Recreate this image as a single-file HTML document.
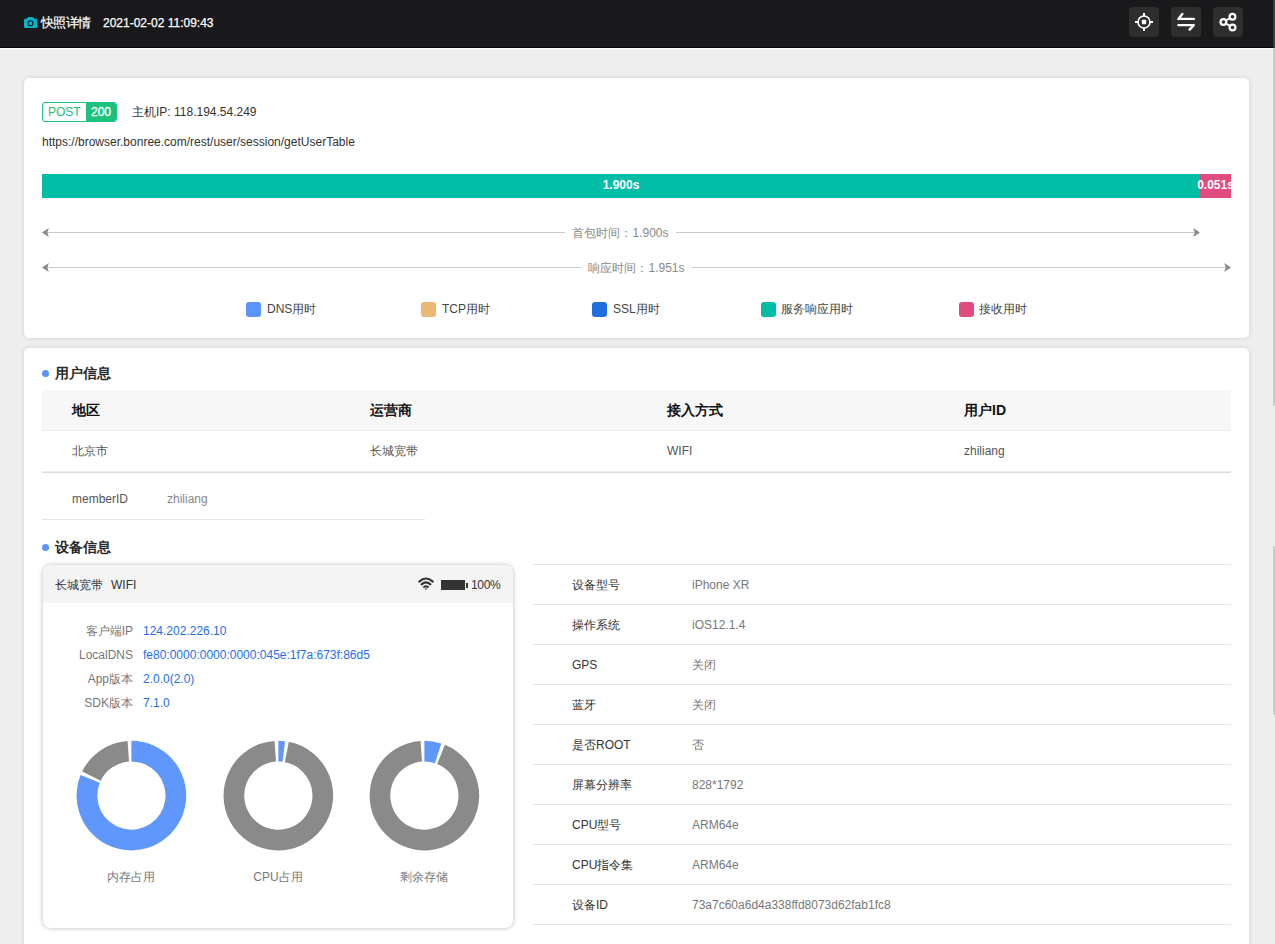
<!DOCTYPE html>
<html><head><meta charset="utf-8">
<style>
*{margin:0;padding:0;box-sizing:border-box}
html,body{width:1275px;height:944px;overflow:hidden}
body{background:#eeeeee;font-family:"Liberation Sans",sans-serif;font-size:12px;color:#333;position:relative}
.abs{position:absolute}
.t{position:absolute;white-space:nowrap;line-height:20px}
#hdr{position:absolute;left:0;top:0;width:1275px;height:48px;background:#19191b;border-bottom:1px solid #070709}
#hdrline{position:absolute;left:0;top:48px;width:1275px;height:1px;background:#fafafa}
.btn{position:absolute;top:7px;width:30px;height:30px;border-radius:4px;background:#2e2e2e}
.card{position:absolute;background:#fff;border-radius:5px;box-shadow:0 0 5px rgba(0,0,0,.12)}
#sb1{position:absolute;left:1273px;top:0;width:2px;height:406px;background:rgba(135,138,145,.32);border-radius:0 0 1px 1px}
#sb2{position:absolute;left:1273px;top:546px;width:2px;height:169px;background:rgba(135,138,145,.32);border-radius:1px}
</style></head>
<body>
<div id="hdr"></div>
<div id="hdrline"></div>
<!-- camera icon -->
<svg class="abs" style="left:24px;top:16px" width="13" height="13" viewBox="0 0 13 13">
<path d="M2.6 2.8 L4.2 0.9 H8.8 L10.4 2.8 H12 Q13 2.8 13 3.8 V11.1 Q13 12.1 12 12.1 H1 Q0 12.1 0 11.1 V3.8 Q0 2.8 1 2.8 Z" fill="#03b3c7"/>
<circle cx="6.5" cy="7.2" r="2.5" fill="none" stroke="#19191b" stroke-width="1.1"/>
</svg>
<div class="t" style="left:41px;top:13px;color:#fff;font-size:13px;letter-spacing:-0.7px;font-weight:500;-webkit-text-stroke:0.2px #fff">快照详情</div>
<div class="t" style="left:103px;top:13px;color:#fff;font-size:12px;-webkit-text-stroke:0.25px #fff">2021-02-02 11:09:43</div>

<div class="btn" style="left:1129px"></div>
<div class="btn" style="left:1171px"></div>
<div class="btn" style="left:1213px"></div>
<svg class="abs" style="left:1129px;top:7px" width="30" height="30" viewBox="0 0 30 30">
<circle cx="15" cy="15" r="6" fill="none" stroke="#fff" stroke-width="1.6"/>
<rect x="12.8" y="12.8" width="4.4" height="4.4" rx="1" fill="#fff"/>
<path d="M15 6 V9.5 M15 20.5 V24 M6 15 H9.5 M20.5 15 H24" stroke="#fff" stroke-width="2"/>
</svg>
<svg class="abs" style="left:1171px;top:7px" width="30" height="30" viewBox="0 0 30 30">
<path d="M7.4 11.9 H22.8 M7.4 11.9 L11.3 7.0 M7.4 18.1 H22.8 M22.8 18.1 L18.6 22.6" stroke="#fff" stroke-width="2.4" stroke-linecap="round" stroke-linejoin="round" fill="none"/>
</svg>
<svg class="abs" style="left:1213px;top:7px" width="30" height="30" viewBox="0 0 30 30">
<path d="M10.4 15 L19.5 9.7 M10.4 15 L19.5 20.5" stroke="#fff" stroke-width="2"/>
<circle cx="10.4" cy="15" r="2.9" fill="#2e2e2e" stroke="#fff" stroke-width="2.2"/>
<circle cx="19.5" cy="9.7" r="2.9" fill="#2e2e2e" stroke="#fff" stroke-width="2.2"/>
<circle cx="19.5" cy="20.5" r="2.9" fill="#2e2e2e" stroke="#fff" stroke-width="2.2"/>
</svg>

<!-- card 1 -->
<div class="card" style="left:24px;top:78px;width:1225px;height:260px"></div>
<div class="abs" style="left:42px;top:102px;width:75px;height:20px;border:1px solid #1bc27c;border-radius:3px;overflow:hidden">
 <div class="abs" style="left:43px;top:0;width:32px;height:18px;background:#1bc27c"></div>
 <div class="t" style="left:5px;top:-1px;color:#1bc27c;line-height:20px">POST</div>
 <div class="t" style="left:48px;top:-1px;color:#fff;line-height:20px;-webkit-text-stroke:0.3px #fff">200</div>
</div>
<div class="t" style="left:132px;top:102px;color:#333">主机IP: 118.194.54.249</div>
<div class="t" style="left:42px;top:132px;color:#333">https://browser.bonree.com/rest/user/session/getUserTable</div>
<div class="abs" style="left:42px;top:174px;width:1189px;height:24px;background:#00bda5;overflow:hidden">
 <div class="abs" style="left:1158px;top:0;width:31px;height:24px;background:#e04b80"></div>
 <div class="t" style="left:0;width:1158px;text-align:center;top:1px;color:#fff;font-weight:bold">1.900s</div>
 <div class="t" style="left:1158px;width:31px;text-align:center;top:1px;color:#fff;font-weight:bold;overflow:visible;display:flex;justify-content:center">0.051s</div>
</div>
<!-- arrow 1 -->
<div class="abs" style="left:44px;top:232px;width:1154px;height:1px;background:#c9c9c9"></div>
<div class="abs" style="left:565px;top:222px;width:111px;height:20px;background:#fff"></div>
<div class="t" style="left:565px;width:111px;text-align:center;top:223px;color:#888">首包时间：1.900s</div>
<!-- arrow 2 -->
<div class="abs" style="left:44px;top:267px;width:1185px;height:1px;background:#c9c9c9"></div>
<div class="abs" style="left:581px;top:257px;width:111px;height:20px;background:#fff"></div>
<div class="t" style="left:581px;width:111px;text-align:center;top:258px;color:#888">响应时间：1.951s</div>
<svg class="abs" style="left:0;top:0" width="1275" height="300">
 <path d="M42 232.5 L48.8 228 L47.3 232.5 L48.8 237 Z" fill="#8a8a8a"/>
 <path d="M1200 232.5 L1193.2 228 L1194.7 232.5 L1193.2 237 Z" fill="#8a8a8a"/>
 <path d="M42 267.5 L48.8 263 L47.3 267.5 L48.8 272 Z" fill="#8a8a8a"/>
 <path d="M1231 267.5 L1224.2 263 L1225.7 267.5 L1224.2 272 Z" fill="#8a8a8a"/>
</svg>
<!-- legend -->
<div class="abs" style="left:246px;top:302px;width:15px;height:15px;border-radius:3px;background:#5b94fe"></div>
<div class="t" style="left:267px;top:299px;color:#444">DNS用时</div>
<div class="abs" style="left:421px;top:302px;width:15px;height:15px;border-radius:3px;background:#e9b872"></div>
<div class="t" style="left:442px;top:299px;color:#444">TCP用时</div>
<div class="abs" style="left:592px;top:302px;width:15px;height:15px;border-radius:3px;background:#1f6fe0"></div>
<div class="t" style="left:613px;top:299px;color:#444">SSL用时</div>
<div class="abs" style="left:761px;top:302px;width:15px;height:15px;border-radius:3px;background:#00bda5"></div>
<div class="t" style="left:781px;top:299px;color:#444">服务响应用时</div>
<div class="abs" style="left:959px;top:302px;width:15px;height:15px;border-radius:3px;background:#e04b80"></div>
<div class="t" style="left:979px;top:299px;color:#444">接收用时</div>
<!-- card 2 -->
<div class="card" style="left:24px;top:348px;width:1225px;height:700px"></div>
<div class="abs" style="left:42px;top:370px;width:7px;height:7px;border-radius:50%;background:#5b94fe"></div>
<div class="t" style="left:55px;top:363px;font-size:14px;font-weight:bold;color:#2a2a2a">用户信息</div>
<div class="abs" style="left:42px;top:390px;width:1189px;height:41px;background:#f7f7f7;border-bottom:1px solid #ebebf3"></div>
<div class="t" style="left:72px;top:400px;font-size:14px;font-weight:bold;color:#111">地区</div>
<div class="t" style="left:370px;top:400px;font-size:14px;font-weight:bold;color:#111">运营商</div>
<div class="t" style="left:667px;top:400px;font-size:14px;font-weight:bold;color:#111">接入方式</div>
<div class="t" style="left:964px;top:400px;font-size:14px;font-weight:bold;color:#111">用户ID</div>
<div class="t" style="left:72px;top:441px;color:#555">北京市</div>
<div class="t" style="left:370px;top:441px;color:#555">长城宽带</div>
<div class="t" style="left:667px;top:441px;color:#555">WIFI</div>
<div class="t" style="left:964px;top:441px;color:#555">zhiliang</div>
<div class="abs" style="left:42px;top:471px;width:1189px;height:1px;background:#ebebf4"></div><div class="abs" style="left:42px;top:472px;width:1189px;height:1px;background:#dcdcdf"></div>
<div class="t" style="left:72px;top:489px;color:#555">memberID</div>
<div class="t" style="left:167px;top:489px;color:#888">zhiliang</div>
<div class="abs" style="left:42px;top:519px;width:383px;height:1px;background:#e5e5e5"></div>
<div class="abs" style="left:42px;top:544px;width:7px;height:7px;border-radius:50%;background:#5b94fe"></div>
<div class="t" style="left:55px;top:537px;font-size:14px;font-weight:bold;color:#2a2a2a">设备信息</div>
<!-- phone -->
<div class="abs" style="left:43px;top:565px;width:470px;height:363px;border-radius:8px;background:#fff;box-shadow:0 0 5px rgba(0,0,0,.28);overflow:hidden">
 <div class="abs" style="left:0;top:0;width:470px;height:38px;background:#f4f4f4"></div>
</div>
<div class="t" style="left:55px;top:575px;color:#333">长城宽带</div><div class="t" style="left:111px;top:575px;color:#333">WIFI</div>
<svg class="abs" style="left:417px;top:576px" width="18" height="15" viewBox="0 0 18 15">
 <path d="M2.2 5.6 Q9 -0.6 15.8 5.6" stroke="#333" stroke-width="2.1" fill="none" stroke-linecap="round"/>
 <path d="M4.6 8.4 Q9 4.4 13.4 8.4" stroke="#333" stroke-width="2.1" fill="none" stroke-linecap="round"/>
 <path d="M7 11 Q9 9.4 11 11" stroke="#333" stroke-width="2" fill="none" stroke-linecap="round"/>
 <path d="M7.5 12.4 L9 13.9 L10.5 12.4 Z" fill="#333"/>
</svg>
<div class="abs" style="left:441px;top:580px;width:24px;height:10px;background:#333"></div>
<div class="abs" style="left:466px;top:583px;width:2px;height:5px;background:#333"></div>
<div class="t" style="left:471px;top:575px;color:#333;letter-spacing:-0.3px">100%</div>
<div class="t" style="left:33px;width:100px;text-align:right;top:621px;color:#777">客户端IP</div>
<div class="t" style="left:33px;width:100px;text-align:right;top:645px;color:#777">LocalDNS</div>
<div class="t" style="left:33px;width:100px;text-align:right;top:669px;color:#777">App版本</div>
<div class="t" style="left:33px;width:100px;text-align:right;top:693px;color:#777">SDK版本</div>
<div class="t" style="left:143px;top:621px;color:#1d6fe5">124.202.226.10</div>
<div class="t" style="left:143px;top:645px;color:#1d6fe5">fe80:0000:0000:0000:045e:1f7a:673f:86d5</div>
<div class="t" style="left:143px;top:669px;color:#1d6fe5">2.0.0(2.0)</div>
<div class="t" style="left:143px;top:693px;color:#1d6fe5">7.1.0</div>
<div class="t" style="left:81px;width:100px;text-align:center;top:867px;color:#777">内存占用</div>
<div class="t" style="left:228px;width:100px;text-align:center;top:867px;color:#777">CPU占用</div>
<div class="t" style="left:374px;width:100px;text-align:center;top:867px;color:#777">剩余存储</div>
<svg class="abs" style="left:0;top:700px" width="520" height="200">
<path d="M131.40 40.80 A54.8 54.8 0 1 1 80.59 75.07 L99.78 82.83 A34.1 34.1 0 1 0 131.40 61.50 Z" fill="#6097fd"/>
<path d="M82.15 71.58 A54.8 54.8 0 0 1 127.58 40.93 L129.02 61.58 A34.1 34.1 0 0 0 100.75 80.65 Z" fill="#8a8a8a"/>
<path d="M278.35 40.80 A54.8 54.8 0 0 1 285.03 41.21 L282.51 61.75 A34.1 34.1 0 0 0 278.35 61.50 Z" fill="#6097fd"/>
<path d="M288.81 41.81 A54.8 54.8 0 1 1 274.53 40.93 L275.97 61.58 A34.1 34.1 0 1 0 284.86 62.13 Z" fill="#8a8a8a"/>
<path d="M424.40 40.80 A54.8 54.8 0 0 1 441.33 43.48 L434.94 63.17 A34.1 34.1 0 0 0 424.40 61.50 Z" fill="#6097fd"/>
<path d="M444.93 44.79 A54.8 54.8 0 1 1 420.58 40.93 L422.02 61.58 A34.1 34.1 0 1 0 437.17 63.98 Z" fill="#8a8a8a"/>
</svg>
<!-- device table -->
<div class="abs" style="left:532px;top:564px;width:699px;height:1px;background:#e5e5e5"></div>
<div class="t" style="left:572px;top:575px;color:#333">设备型号</div><div class="t" style="left:692px;top:575px;color:#777">iPhone XR</div>
<div class="abs" style="left:532px;top:604px;width:699px;height:1px;background:#e5e5e5"></div>
<div class="t" style="left:572px;top:615px;color:#333">操作系统</div><div class="t" style="left:692px;top:615px;color:#777">iOS12.1.4</div>
<div class="abs" style="left:532px;top:644px;width:699px;height:1px;background:#e5e5e5"></div>
<div class="t" style="left:572px;top:655px;color:#333">GPS</div><div class="t" style="left:692px;top:655px;color:#777">关闭</div>
<div class="abs" style="left:532px;top:684px;width:699px;height:1px;background:#e5e5e5"></div>
<div class="t" style="left:572px;top:695px;color:#333">蓝牙</div><div class="t" style="left:692px;top:695px;color:#777">关闭</div>
<div class="abs" style="left:532px;top:724px;width:699px;height:1px;background:#e5e5e5"></div>
<div class="t" style="left:572px;top:735px;color:#333">是否ROOT</div><div class="t" style="left:692px;top:735px;color:#777">否</div>
<div class="abs" style="left:532px;top:764px;width:699px;height:1px;background:#e5e5e5"></div>
<div class="t" style="left:572px;top:775px;color:#333">屏幕分辨率</div><div class="t" style="left:692px;top:775px;color:#777">828*1792</div>
<div class="abs" style="left:532px;top:804px;width:699px;height:1px;background:#e5e5e5"></div>
<div class="t" style="left:572px;top:815px;color:#333">CPU型号</div><div class="t" style="left:692px;top:815px;color:#777">ARM64e</div>
<div class="abs" style="left:532px;top:844px;width:699px;height:1px;background:#e5e5e5"></div>
<div class="t" style="left:572px;top:855px;color:#333">CPU指令集</div><div class="t" style="left:692px;top:855px;color:#777">ARM64e</div>
<div class="abs" style="left:532px;top:884px;width:699px;height:1px;background:#e5e5e5"></div>
<div class="t" style="left:572px;top:895px;color:#333">设备ID</div><div class="t" style="left:692px;top:895px;color:#777">73a7c60a6d4a338ffd8073d62fab1fc8</div>
<div class="abs" style="left:532px;top:924px;width:699px;height:1px;background:#e5e5e5"></div>

<div id="sb1"></div>
<div id="sb2"></div>
</body></html>
